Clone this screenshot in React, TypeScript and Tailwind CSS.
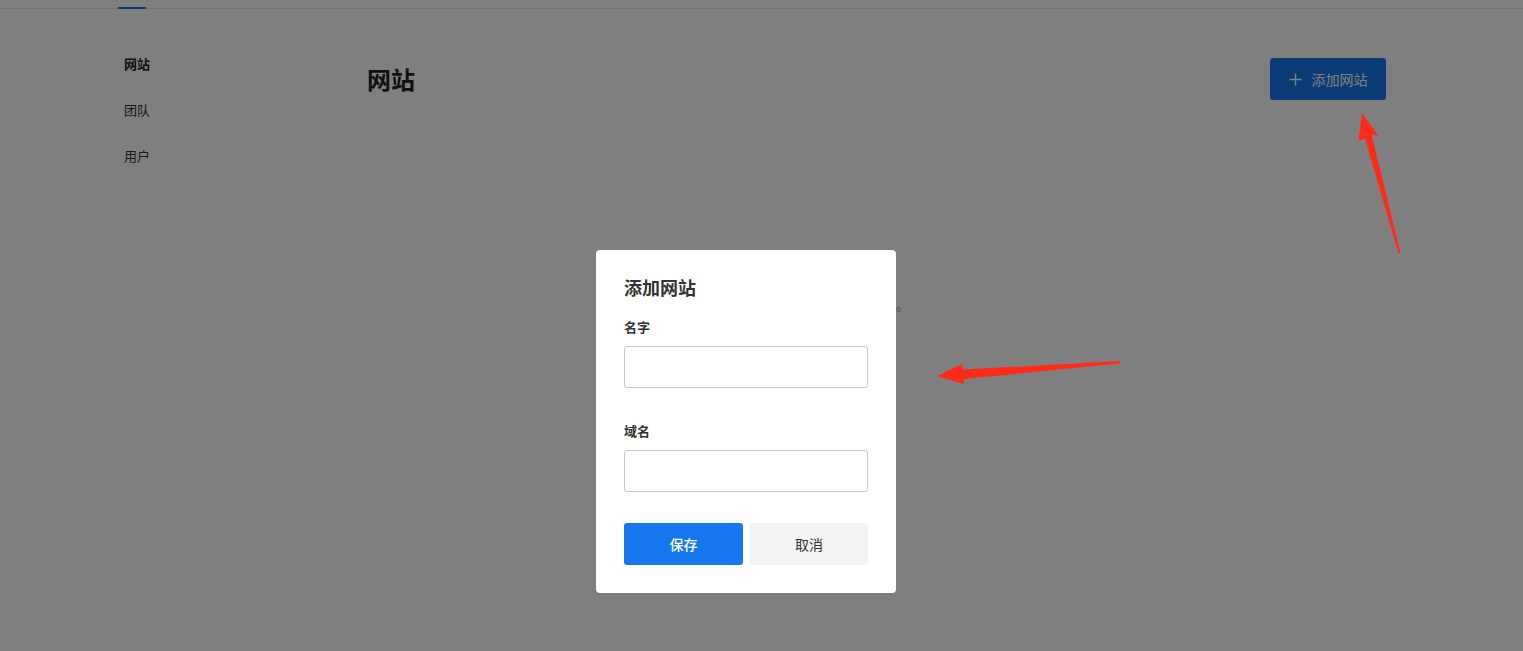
import React from "react";

const font = { fontFamily: '"Noto Sans CJK SC", "Noto Sans", sans-serif' };

function Sidebar() {
  const items = [
    { label: "网站", active: true },
    { label: "团队", active: false },
    { label: "用户", active: false },
  ];
  return (
    <nav className="w-[243px] shrink-0 pt-[32px]">
      {items.map((it) => (
        <div
          key={it.label}
          className={`h-[46px] flex items-center text-[13px] leading-5 ${
            it.active ? "font-bold text-[#222]" : "text-[#333]"
          }`}
        >
          {it.label}
        </div>
      ))}
    </nav>
  );
}

function Main() {
  return (
    <main className="flex-1 pr-[137px] pt-[49px] flex flex-col">
      <div className="flex items-center justify-between">
        <h1 className="text-[24px] leading-8 font-bold text-[#222]">网站</h1>
        <button className="h-[42px] w-[116px] rounded-[3px] bg-[#1677ef] text-white text-[14px] flex items-center justify-center gap-[10px]">
          <svg width="13" height="13" viewBox="0 0 13 13" fill="none" stroke="currentColor" strokeWidth="1.4">
            <path d="M6.5 0.5v12M0.5 6.5h12" />
          </svg>
          <span>添加网站</span>
        </button>
      </div>
      <div className="flex justify-center pt-[195px]">
        <p className="text-[13px] leading-5 text-[#999]">暂无网站。</p>
      </div>
    </main>
  );
}

function Field({ label, gap }: { label: string; gap: string }) {
  return (
    <div className={`flex flex-col ${gap}`}>
      <label className="text-[13px] leading-5 font-bold text-[#333]">{label}</label>
      <input
        className="mt-[9px] h-[42px] w-full rounded-[3px] border border-[#c8c8c8] bg-white px-3 text-[14px] outline-none"
        type="text"
      />
    </div>
  );
}

function Dialog() {
  return (
    <div className="absolute left-[596px] top-[250px] w-[300px] rounded-[4px] bg-white px-[28px] pt-[24px] pb-[28px]">
      <h2 className="text-[18px] leading-[26px] font-bold text-[#333]">添加网站</h2>
      <Field label="名字" gap="mt-[17px]" />
      <Field label="域名" gap="mt-[33px]" />
      <div className="mt-[31px] flex gap-[7px]">
        <button className="h-[42px] w-[119px] rounded-[3px] bg-[#1677ef] text-white text-[14px] font-medium">保存</button>
        <button className="h-[42px] flex-1 rounded-[3px] bg-[#f3f3f3] text-[#333] text-[14px]">取消</button>
      </div>
    </div>
  );
}

function Arrows() {
  return (
    <svg className="absolute inset-0 pointer-events-none" width="1523" height="651" viewBox="0 0 1523 651">
      <polygon
        fill="#ff2a1a"
        points="1362,113 1378.5,136 1371.5,134.5 1400.5,253 1398.5,253.5 1365,138.5 1358.5,140.5"
      />
      <polygon
        fill="#ff2a1a"
        points="937,376 962,364 963,369.5 1120,361 1120,363.5 964,379 963.5,384"
      />
    </svg>
  );
}

export default function App() {
  return (
    <div className="relative w-[1523px] h-[651px] overflow-hidden bg-white" style={font}>
      <header className="relative h-[9px] border-b border-[#e0e0e0]">
        <div className="absolute left-[118px] bottom-[-1px] w-[28px] h-[2px] bg-[#1677ef]" />
      </header>
      <div className="flex pl-[124px]">
        <Sidebar />
        <Main />
      </div>
      <div className="absolute inset-0 bg-black/50" />
      <Dialog />
      <Arrows />
    </div>
  );
}
